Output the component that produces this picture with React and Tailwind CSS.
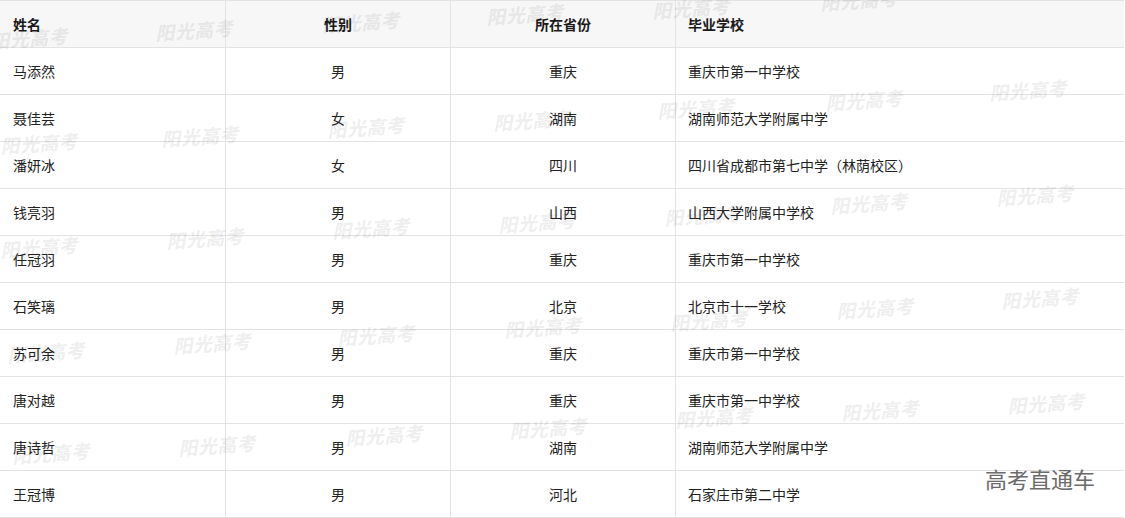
import React from "react";

const rows = [
  ["马添然", "男", "重庆", "重庆市第一中学校"],
  ["聂佳芸", "女", "湖南", "湖南师范大学附属中学"],
  ["潘妍冰", "女", "四川", "四川省成都市第七中学（林荫校区）"],
  ["钱亮羽", "男", "山西", "山西大学附属中学校"],
  ["任冠羽", "男", "重庆", "重庆市第一中学校"],
  ["石笑璃", "男", "北京", "北京市十一学校"],
  ["苏可余", "男", "重庆", "重庆市第一中学校"],
  ["唐对越", "男", "重庆", "重庆市第一中学校"],
  ["唐诗哲", "男", "湖南", "湖南师范大学附属中学"],
  ["王冠博", "男", "河北", "石家庄市第二中学"],
];

const marks = [
  [-10, 38], [155, 30], [322, 22], [486, 14], [652, 8], [820, 0],
  [0, 143], [161, 136], [327, 127], [493, 120], [657, 108], [825, 100], [989, 90],
  [0, 247], [166, 238], [332, 228], [498, 222], [664, 215], [830, 203], [996, 195],
  [7, 352], [173, 343], [337, 335], [504, 327], [670, 320], [836, 308], [1001, 298],
  [12, 453], [178, 445], [345, 435], [509, 428], [675, 417], [841, 410], [1007, 403],
];

const font = { fontFamily: '"Noto Sans CJK SC", "Noto Sans", sans-serif' };

function Row({ cells, header }) {
  const base = "h-[47px] border-b border-[#e3e3e3] flex items-center text-[14px] leading-none";
  const tone = header ? "bg-[#f7f7f7] font-bold text-[#1a1a1a]" : "bg-white text-[#222]";
  return (
    <div className="grid grid-cols-[226px_225px_225px_448px]">
      <div className={`${base} ${tone} border-r pl-[13px]`}>{cells[0]}</div>
      <div className={`${base} ${tone} border-r justify-center`}>{cells[1]}</div>
      <div className={`${base} ${tone} border-r justify-center`}>{cells[2]}</div>
      <div className={`${base} ${tone} pl-[12px]`}>{cells[3]}</div>
    </div>
  );
}

export default function App() {
  return (
    <div className="relative w-[1125px] h-[518px] overflow-hidden bg-white" style={font}>
      <div className="w-[1124px] border-t border-r border-[#e3e3e3]">
        <Row header cells={["姓名", "性别", "所在省份", "毕业学校"]} />
        {rows.map((r, i) => (
          <Row key={i} cells={r} />
        ))}
      </div>
      {marks.map(([x, y], i) => (
        <div
          key={i}
          className="absolute pointer-events-none select-none text-[19px] leading-none font-black italic tracking-[0.5px] text-black/[0.07] rotate-[-4deg] whitespace-nowrap"
          style={{ left: x, top: y - 10 }}
        >
          阳光高考
        </div>
      ))}
      <div className="absolute left-[985px] top-[467px] text-[22px] leading-none text-[#6b6b6b] whitespace-nowrap pointer-events-none">
        高考直通车
      </div>
    </div>
  );
}
